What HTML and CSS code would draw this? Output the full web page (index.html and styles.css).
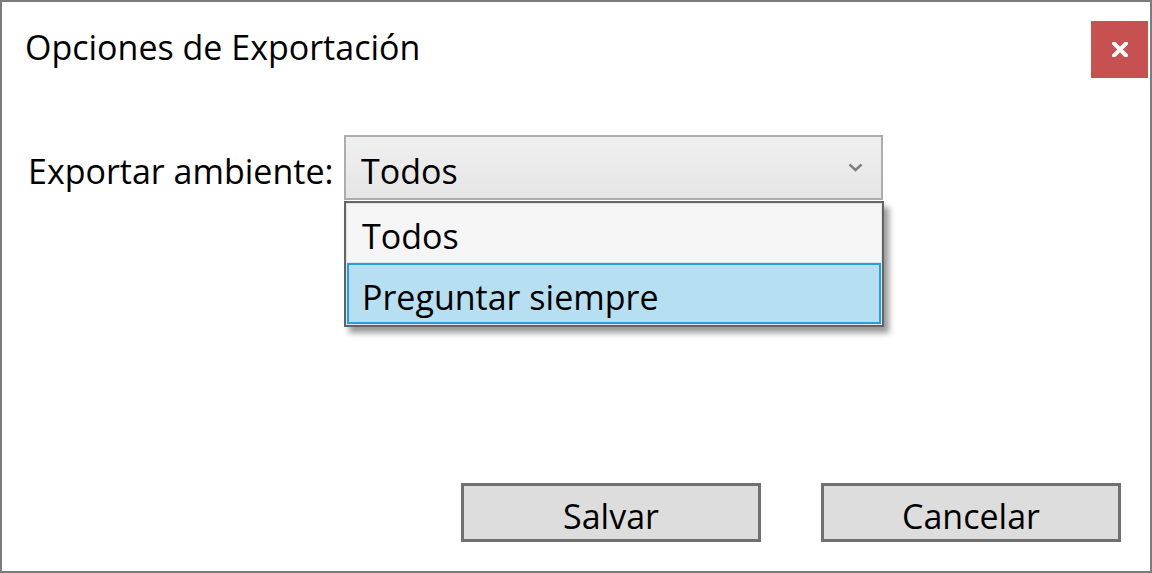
FILE: index.html
```html
<!DOCTYPE html>
<html lang="es">
<head>
<meta charset="utf-8">
<title>Opciones de Exportación</title>
<link rel="stylesheet" href="styles.css">
</head>
<body>
<div class="window">
  <div class="titlebar">
    <div class="title">Opciones de Exportación</div>
    <div class="close" aria-label="Cerrar">
      <svg width="16" height="15" viewBox="0 0 16 15"><path d="M2 1.5 L14 13.5 M14 1.5 L2 13.5" stroke="#fff" stroke-width="4" stroke-linecap="square" fill="none"/></svg>
    </div>
  </div>
  <div class="form-row">
    <div class="label">Exportar ambiente:</div>
    <div class="combo">
      <span class="combo-value">Todos</span>
      <svg class="chevron" width="15" height="9" viewBox="0 0 15 9"><path d="M1.5 1.5 L7.5 7 L13.5 1.5" stroke="#808080" stroke-width="2.4" fill="none"/></svg>
      <div class="dropdown">
        <div class="item">Todos</div>
        <div class="item selected">Preguntar siempre</div>
      </div>
    </div>
  </div>
  <div class="buttons">
    <div class="btn">Salvar</div>
    <div class="btn">Cancelar</div>
  </div>
</div>
</body>
</html>
```

FILE: styles.css
```css
html, body {
  margin: 0;
  padding: 0;
  background: #fff;
}
body {
  font-family: "Open Sans", "Noto Sans", sans-serif;
  color: #000;
}
.window {
  width: 1152px;
  height: 573px;
  box-sizing: border-box;
  border: 2px solid #7c7c7c;
  background: #fff;
  display: flex;
  flex-direction: column;
}
.titlebar {
  display: flex;
  justify-content: space-between;
  align-items: flex-start;
  padding: 19px 2px 0 23px;
}
.title {
  font-size: 34px;
  line-height: 40px;
  margin-top: 6px;
}
.close {
  width: 57px;
  height: 57px;
  background: #c75050;
  display: flex;
  align-items: center;
  justify-content: center;
}
.form-row {
  display: flex;
  align-items: center;
  margin-top: 57px;
  padding-left: 26px;
}
.label {
  flex: 0 0 316px;
  font-size: 34px;
  line-height: 40px;
  padding-top: 6px;
}
.combo {
  position: relative;
  width: 539px;
  height: 65px;
  box-sizing: border-box;
  border: 2px solid #adadad;
  background: linear-gradient(#f0f0f0, #e5e5e5);
  display: flex;
  align-items: center;
  padding: 0 18px 0 15px;
  font-size: 34px;
}
.combo-value {
  flex: 1;
  line-height: 40px;
  padding-top: 6px;
}
.chevron {
  display: block;
}
.dropdown {
  position: absolute;
  top: 64px;
  left: -2px;
  width: 540px;
  height: 126px;
  box-sizing: border-box;
  border: 2px solid #646464;
  padding: 1px;
  background: #e2e2e2;
  box-shadow: 5px 6px 6px rgba(0, 0, 0, 0.4);
  display: flex;
  flex-direction: column;
  gap: 1px;
}
.item {
  height: 58px;
  box-sizing: border-box;
  background: #f5f5f5;
  padding: 6px 0 0 15px;
  display: flex;
  align-items: center;
  font-size: 34px;
  line-height: 40px;
}
.item.selected {
  height: 61px;
  background: #b7dff2;
  border: 2px solid #26a0da;
  padding-left: 13px;
}
.buttons {
  margin-top: auto;
  display: flex;
  justify-content: flex-end;
  gap: 60px;
  padding: 0 29px 29px 0;
}
.btn {
  width: 300px;
  height: 59px;
  box-sizing: border-box;
  border: 3px solid #707070;
  background: #dddddd;
  display: flex;
  align-items: center;
  justify-content: center;
  padding-top: 6px;
  font-size: 34px;
  line-height: 40px;
}
```
